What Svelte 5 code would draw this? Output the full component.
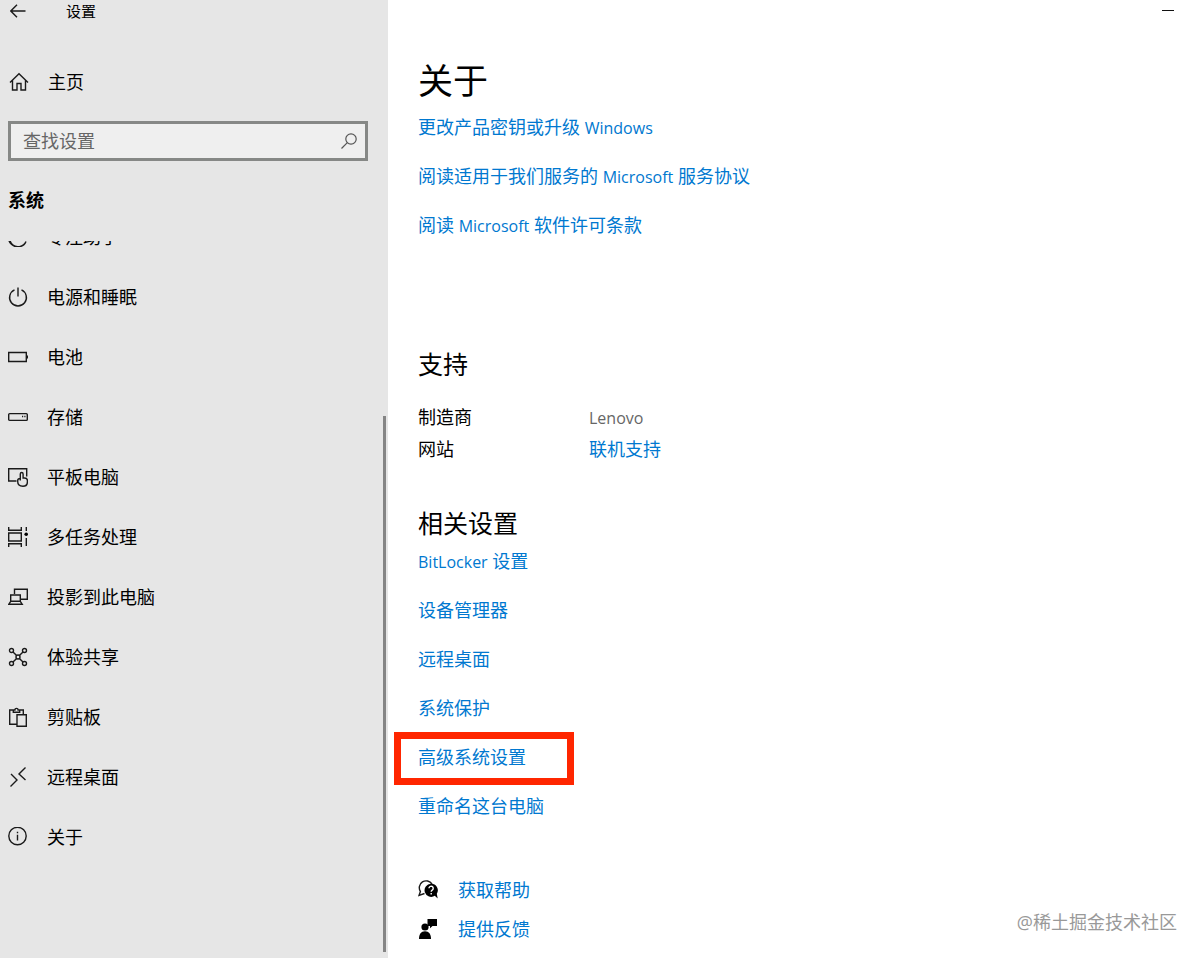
<script>
  const navItems = [
    { id: 'focus', label: '专注助手' },
    { id: 'power', label: '电源和睡眠' },
    { id: 'battery', label: '电池' },
    { id: 'storage', label: '存储' },
    { id: 'tablet', label: '平板电脑' },
    { id: 'multitask', label: '多任务处理' },
    { id: 'project', label: '投影到此电脑' },
    { id: 'shared', label: '体验共享' },
    { id: 'clipboard', label: '剪贴板' },
    { id: 'remote', label: '远程桌面' },
    { id: 'about', label: '关于' }
  ];

  const licenseLinks = [
    { before: '更改产品密钥或升级 ', latin: 'Windows', after: '' },
    { before: '阅读适用于我们服务的 ', latin: 'Microsoft', after: ' 服务协议' },
    { before: '阅读 ', latin: 'Microsoft', after: ' 软件许可条款' }
  ];

  const relatedLinks = [
    { latin: 'BitLocker', after: ' 设置' },
    { after: '设备管理器' },
    { after: '远程桌面' },
    { after: '系统保护' },
    { after: '高级系统设置', marked: true },
    { after: '重命名这台电脑' }
  ];

  let query = $state('');
</script>

{#snippet icon(id)}
  <svg class="icon" viewBox="0 0 20 20" aria-hidden="true">
    {#if id === 'home'}
      <path d="M1 10.500 10 1.700l9 8.800M3.500 8.500V18h4.500v-6.500h4V18h4.500V8.500" />
    {:else if id === 'focus'}
      <path d="M6 3.500a9 8.500 0 1 0 12 11A8.500 8.500 0 0 1 2 13.500" />
    {:else if id === 'power'}
      <path d="M10 .5V9.500M6.500 2.900a8.400 8.400 0 1 0 7 0" />
    {:else if id === 'battery'}
      <path d="M.7 5.500h17.600v9H.7zM19.400 8.500v3" />
    {:else if id === 'storage'}
      <rect x=".7" y="6.600" width="18.600" height="6.800" rx="1" />
      <path d="M14 9.500h1.200M16.300 9.500h1.200" />
    {:else if id === 'tablet'}
      <path d="M8.500 14H.7V1.700h18V9.500" />
      <path d="M12.300 13.500V6.900a1.400 1.400 0 0 1 2.800 0V11h1.400c2 0 2.900.9 2.900 2.600v1.200c0 2.900-1.700 4.500-4.500 4.500-3.100 0-5.200-1.900-5.200-4.700v-1.100c0-1.200.9-2 2.600-2" />
    {:else if id === 'multitask'}
      <path d="M.7 0v3.200h12.600V0M.7 20v-3.200h12.600V20M.7 6h12.600v8H.7zM18.300 0v4M18.300 11v8" />
      <circle class="solid" cx="18.200" cy="7.300" r="1.800" />
    {:else if id === 'project'}
      <path d="M6.500 7V2.200h12.800v10H13M2.700 8h9.600v6.300H2.700zM2.700 14.300.8 17.200h13.400l-1.900-2.900" />
    {:else if id === 'shared'}
      <circle cx="3.500" cy="3.500" r="2" /><circle cx="16.500" cy="3.500" r="2" />
      <circle cx="3.500" cy="16.500" r="2" /><circle cx="16.500" cy="16.500" r="2" />
      <circle cx="10" cy="10" r="2" />
      <path d="m5 5 3.600 3.600M15 5l-3.600 3.600M5 15l3.600-3.600M15 15l-3.600-3.600" />
    {:else if id === 'clipboard'}
      <path d="M8.500 17.300H1.700V3h4M11.300 3h4v4.500M5.300 5.200V3h1.600a1.600 1.600 0 0 1 3.200 0h1.600v2.200zM9 7.700h9.300v11.600H9z" />
    {:else if id === 'remote'}
      <path d="m3 7 6 6-6.500 6.500M17.500.5 11 7l6.500 6" />
    {:else if id === 'about'}
      <circle cx="9.500" cy="9" r="8.700" />
      <path d="M9.500 7.800v5.700M9.500 4.800v1.400" />
    {:else if id === 'help'}
      <path d="M6.500 13.500 1 15.500l1.400-4A6.500 6.500 0 1 1 14 4" />
      <path class="solid" d="M13 3.700a6.600 6.600 0 1 0 3.800 12.100l2.900 2.700-.9-4.700A6.600 6.600 0 0 0 13 3.700Z" />
      <path class="knockout" d="M11 8.300a2.100 2.100 0 1 1 3.200 1.800c-.8.500-1 .8-1 1.600M13.200 13v1.500" />
    {:else if id === 'feedback'}
      <path class="solid" d="M9.500 0H19v7h-4.500L12 9.300V7H9.500zM1 20c0-4.700 2-7.700 6-7.700s6 3 6 7.700z" />
      <circle class="solid" cx="7" cy="8" r="3.600" />
    {/if}
  </svg>
{/snippet}

<div class="window">
  <aside class="sidebar">
    <header class="titlebar">
      <button class="back" aria-label="返回">
        <svg viewBox="0 0 16 14" aria-hidden="true"><path d="M15.500 7H1M7 .8.800 7 7 13.200" /></svg>
      </button>
      <span>设置</span>
    </header>

    <a class="home" href="#home">{@render icon('home')}<span>主页</span></a>

    <div class="search">
      <input type="text" aria-label="查找设置" placeholder="查找设置" bind:value={query} />
      <button aria-label="搜索">
        <svg viewBox="0 0 16 16" aria-hidden="true"><circle cx="10" cy="6" r="5.200" /><path d="M6.300 9.700.5 15.500" /></svg>
      </button>
    </div>

    <h2 class="category">系统</h2>

    <nav>
      <ul>
        {#each navItems as item (item.id)}
          <li><a href="#{item.id}">{@render icon(item.id)}<span>{item.label}</span></a></li>
        {/each}
      </ul>
    </nav>
    <div class="thumb"></div>
  </aside>

  <main>
    <button class="minimize" aria-label="最小化"></button>

    <h1>关于</h1>
    <ul class="links license">
      {#each licenseLinks as link}
        <li><a href="#license">{link.before}<span class="latin">{link.latin}</span>{link.after}</a></li>
      {/each}
    </ul>

    <section class="support">
      <h2>支持</h2>
      <dl>
        <dt>制造商</dt>
        <dd><span class="latin">Lenovo</span></dd>
        <dt>网站</dt>
        <dd><a href="#support">联机支持</a></dd>
      </dl>
    </section>

    <section class="related">
      <h2>相关设置</h2>
      <ul class="links">
        {#each relatedLinks as link}
          <li>
            <a class:marked={link.marked} href="#related">{#if link.latin}<span class="latin">{link.latin}</span>{/if}{link.after}</a>
          </li>
        {/each}
      </ul>
    </section>

    <footer>
      <a href="#help">{@render icon('help')}<span>获取帮助</span></a>
      <a href="#feedback">{@render icon('feedback')}<span>提供反馈</span></a>
    </footer>

    <p class="watermark">@稀土掘金技术社区</p>
  </main>
</div>

<style>
  :global(body) {
    margin: 0;
    background: #fff;
  }

  .window {
    display: grid;
    grid-template-columns: 388px 1fr;
    min-height: 100vh;
    font: 18px/24px "Open Sans", "Noto Sans CJK SC", sans-serif;
    color: #000;
  }

  h1, h2, ul, dl, dd, p {
    margin: 0;
    padding: 0;
    font-weight: 400;
  }

  ul {
    list-style: none;
  }

  a {
    color: #0078d0;
    text-decoration: none;
  }

  button {
    padding: 0;
    border: 0;
    background: none;
  }

  svg {
    display: block;
    flex: none;
    fill: none;
    stroke: #1a1a1a;
    stroke-width: 1.4;
  }

  .icon {
    width: 20px;
    height: 20px;
  }

  .solid {
    fill: #000;
    stroke: none;
  }

  .knockout {
    stroke: #fff;
  }

  .latin {
    font-size: 16px;
    line-height: 16px;
  }

  .sidebar {
    position: relative;
    display: flex;
    flex-direction: column;
    background: #e6e6e6;
  }

  .titlebar {
    display: flex;
    align-items: center;
    gap: 40px;
    height: 22px;
    padding-left: 10px;
    font-size: 15px;
  }

  .back svg {
    width: 16px;
    height: 14px;
  }

  .home {
    display: flex;
    align-items: center;
    gap: 19px;
    height: 60px;
    margin-top: 30px;
    padding-left: 9px;
    color: #000;
  }

  .search {
    display: flex;
    align-items: center;
    box-sizing: border-box;
    height: 40px;
    margin: 9px 20px 0 8px;
    padding: 0 8px 0 12px;
    border: 3px solid #868886;
    background: #efefef;
  }

  .search input {
    flex: 1;
    min-width: 0;
    padding: 0;
    border: 0;
    outline: 0;
    background: none;
    font: inherit;
    color: #000;
  }

  .search input::placeholder {
    color: #666;
    opacity: 1;
  }

  .search svg {
    width: 16px;
    height: 16px;
    stroke: #555;
    stroke-width: 1.2;
  }

  .category {
    margin: 27px 8px 29px;
    font-size: 18px;
    font-weight: 700;
  }

  nav {
    flex: 1;
    overflow: hidden;
  }

  nav ul {
    margin-top: -34px;
  }

  nav a {
    display: flex;
    align-items: center;
    gap: 19px;
    height: 60px;
    padding-left: 8px;
    color: #000;
  }

  .thumb {
    position: absolute;
    right: 2px;
    bottom: 6px;
    width: 3px;
    height: 56%;
    background: #858585;
  }

  main {
    position: relative;
    padding: 57px 24px 16px 30px;
  }

  .minimize {
    position: absolute;
    top: 4px;
    right: 28px;
    width: 12px;
    height: 12px;
    background: linear-gradient(#111, #111) center / 12px 1px no-repeat;
  }

  h1 {
    font-size: 35px;
    line-height: 48px;
  }

  .links {
    display: flex;
    flex-direction: column;
    align-items: flex-start;
    gap: 25px;
  }

  .license {
    margin-top: 10px;
  }

  main h2 {
    font-size: 25px;
    line-height: 36px;
  }

  .support {
    margin-top: 109px;
  }

  dl {
    display: grid;
    grid-template-columns: 171px 1fr;
    row-gap: 8px;
    margin-top: 23px;
  }

  dd {
    color: #666;
  }

  .related {
    margin-top: 44px;
  }

  .related .links {
    margin-top: 8px;
  }

  .related li {
    position: relative;
  }

  .marked::after {
    content: "";
    position: absolute;
    inset: -13px -48px -16px -24px;
    border: 7px solid #ff2600;
  }

  footer {
    display: grid;
    justify-content: start;
    row-gap: 15px;
    margin-top: 60px;
  }

  footer a {
    display: flex;
    align-items: center;
    gap: 20px;
  }

  .watermark {
    position: absolute;
    right: 25px;
    bottom: 24px;
    color: #999;
  }
</style>
